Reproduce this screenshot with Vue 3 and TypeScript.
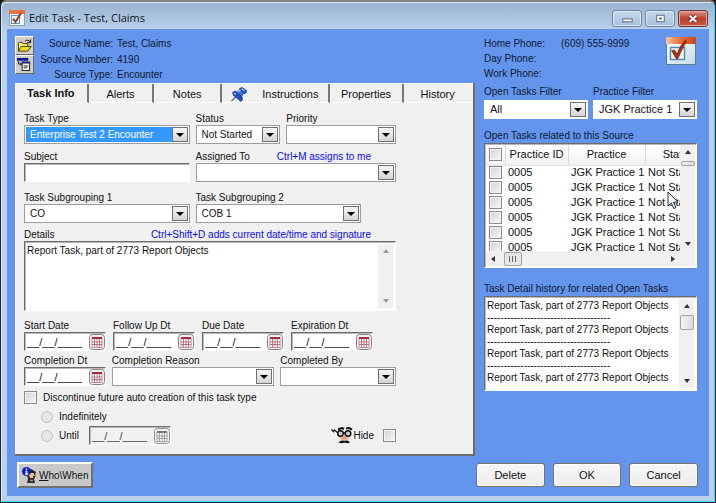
<script setup lang="ts">
import { ref } from 'vue'

interface TaskRow { id: string; practice: string; status: string; picked: boolean }

const sources = [
  { label: 'Source Name:', value: 'Test, Claims' },
  { label: 'Source Number:', value: '4190' },
  { label: 'Source Type:', value: 'Encounter' },
]
const phones = [
  { label: 'Home Phone:', value: '(609) 555-9999' },
  { label: 'Day Phone:', value: '' },
  { label: 'Work Phone:', value: '' },
]
const tabs = ['Task Info', 'Alerts', 'Notes', 'Instructions', 'Properties', 'History']
const activeTab = ref('Task Info')

const typeRow = [
  { id: 'type', label: 'Task Type', value: 'Enterprise Test 2 Encounter', selected: true },
  { id: 'status', label: 'Status', value: 'Not Started', selected: false },
  { id: 'priority', label: 'Priority', value: '', selected: false },
]
const groupRow = [
  { id: 'group1', label: 'Task Subgrouping 1', value: 'CO' },
  { id: 'group2', label: 'Task Subgrouping 2', value: 'COB 1' },
]
const dates = [
  { id: 'start', label: 'Start Date' },
  { id: 'follow', label: 'Follow Up Dt' },
  { id: 'due', label: 'Due Date' },
  { id: 'expire', label: 'Expiration Dt' },
]
const completionRow = [
  { id: 'reason', label: 'Completion Reason' },
  { id: 'by', label: 'Completed By' },
]
const filters = [
  { id: 'open-filter', label: 'Open Tasks Filter', value: 'All' },
  { id: 'practice-filter', label: 'Practice Filter', value: 'JGK Practice 1' },
]
const emptyDate = '__/__/____'
const subject = ref('')
const details = ref('Report Task, part of 2773 Report Objects')
const history = Array(4).fill(details.value).join('\n' + '-'.repeat(37) + '\n')
const discontinue = ref(false)
const hide = ref(false)
const allPicked = ref(false)
const rows = ref<TaskRow[]>(
  Array.from({ length: 6 }, () => ({ id: '0005', practice: 'JGK Practice 1', status: 'Not Started', picked: false })),
)
</script>

<template>
  <div class="window">
    <header class="titlebar">
      <svg class="app-icon" viewBox="0 0 16 16">
        <rect x="0.5" y="0.5" width="15" height="15" fill="#eef4f8" stroke="#8fa0ae" />
        <rect x="0" y="0" width="16" height="4" fill="#e0763a" />
        <rect x="2.5" y="5.5" width="8" height="8" fill="#fff" stroke="#5d92bd" />
        <path d="M4 8.5l2.5 3.5L12 3" fill="none" stroke="#8e3c20" stroke-width="2" />
      </svg>
      <h1>Edit Task - Test, Claims</h1>
      <div class="caption">
        <button type="button" aria-label="Minimize"><svg viewBox="0 0 28 16"><rect x="9.500" y="8.500" width="10" height="3" fill="#fff" stroke="#56657a" /></svg></button>
        <button type="button" aria-label="Maximize"><svg viewBox="0 0 28 16"><rect x="10.500" y="4.500" width="8" height="7" fill="#fff" stroke="#56657a" /><rect x="13" y="7" width="3" height="2" fill="#56657a" /></svg></button>
        <button type="button" class="close" aria-label="Close"><svg viewBox="0 0 28 16"><path d="M10.500 5l7 6.500M17.500 5l-7 6.500" stroke="#6c3030" stroke-width="4" /><path d="M10.500 5l7 6.500M17.500 5l-7 6.500" stroke="#fff" stroke-width="2.200" /></svg></button>
      </div>
    </header>

    <main class="client">
      <section class="left">
        <div class="source">
          <div class="tools">
            <button type="button" aria-label="Open source">
              <svg viewBox="0 0 16 16">
                <path d="M1.500 14V5.500l1-1h3l1 1.500h5v3" fill="#fff36b" stroke="#3a3600" />
                <path d="M1.500 14L4.500 9h10.500l-3.500 5z" fill="#f0dc28" stroke="#3a3600" />
                <path d="M8.500 3.500q2-2.500 4.500-.5l1 1.500M14.500 1.500v3.500H11" fill="none" stroke="#111" />
              </svg>
            </button>
            <button type="button" aria-label="Source list">
              <svg viewBox="0 0 16 16">
                <rect x="0" y="1" width="12" height="3" fill="#0a1a9a" />
                <path d="M1.500 4v3.500H5M3 6l2 1.500L3 9" fill="none" stroke="#222" />
                <rect x="5.500" y="5.500" width="8" height="9" fill="#fff" stroke="#111" />
                <rect x="5" y="5" width="9" height="2" fill="#1b2a8e" />
                <path d="M7 9.500h5M7 11.500h4" stroke="#111" />
              </svg>
            </button>
          </div>
          <dl>
            <template v-for="s in sources" :key="s.label"><dt>{{ s.label }}</dt><dd>{{ s.value }}</dd></template>
          </dl>
        </div>

        <div class="panel">
          <nav class="tabs" role="tablist">
            <button
              v-for="t in tabs" :key="t" type="button" role="tab"
              :class="{ active: t === activeTab }"
              :aria-selected="t === activeTab" @click="activeTab = t"
            >
              <svg v-if="t === 'Instructions'" class="pin" viewBox="0 0 16 15">
                <path d="M.5 14L6 8.500" stroke="#66708c" stroke-width="1.400" />
                <path d="M1.500 5.500L4.500 4l6.500 5.500.5 3.500-2 1.500-2.500-2.500L2.500 8.500z" fill="#2150bf" stroke="#15327f" stroke-width=".7" />
                <path d="M5.500 5l4-3 3.500 3.500-2.500 4z" fill="#3d74e0" stroke="#15327f" stroke-width=".7" />
                <path d="M8.500 1.500L11 .500l4.500 3-.5 2.500-2 .5z" fill="#2a5bd0" stroke="#15327f" stroke-width=".7" />
                <path d="M6.500 5l3-2M10.500 1.800l3 1.700M3 6l2 1.500" stroke="#a9c6fb" stroke-width="1.200" />
              </svg>
              {{ t }}
            </button>
          </nav>

          <form class="form" @submit.prevent>
            <div class="row types">
              <div v-for="f in typeRow" :key="f.id" class="field">
                <label :for="f.id">{{ f.label }}</label>
                <span class="combo" :class="{ selected: f.selected }">
                  <select :id="f.id"><option>{{ f.value }}</option></select><i></i>
                </span>
              </div>
            </div>

            <div class="row subject">
              <div class="field">
                <label for="subject">Subject</label>
                <input id="subject" v-model="subject" class="sunken" type="text">
              </div>
              <div class="field">
                <div class="caption-row"><label for="assigned">Assigned To</label><span class="hint">Ctrl+M assigns to me</span></div>
                <span class="combo"><select id="assigned"><option></option></select><i></i></span>
              </div>
            </div>

            <div class="row groups">
              <div v-for="f in groupRow" :key="f.id" class="field">
                <label :for="f.id">{{ f.label }}</label>
                <span class="combo"><select :id="f.id"><option>{{ f.value }}</option></select><i></i></span>
              </div>
            </div>

            <div class="field details">
              <div class="caption-row"><label for="details">Details</label><span class="hint">Ctrl+Shift+D adds current date/time and signature</span></div>
              <div class="sunken memo">
                <textarea id="details" v-model="details"></textarea>
                <div class="vbar idle"><b class="up"></b><b class="down"></b></div>
              </div>
            </div>

            <div class="row dates">
              <div v-for="d in dates" :key="d.id" class="field">
                <label :for="d.id">{{ d.label }}</label>
                <span class="sunken date">
                  <input :id="d.id" type="text" :value="emptyDate">
                  <button type="button" :aria-label="d.label + ' calendar'">
                    <svg viewBox="0 0 16 16"><rect x=".5" y=".5" width="15" height="15" rx="3" fill="#f7f0f1" stroke="#8b7d80" /><path d="M3 3.500h10v10H3z" fill="#fff" stroke="#b0757c" stroke-width=".8" /><path d="M3 4h10" stroke="#a12c3c" stroke-width="2" /><path d="M5.500 5v8M8 5v8M10.500 5v8M3 8h10M3 10.500h10" stroke="#b06a76" stroke-width=".9" /></svg>
                  </button>
                </span>
              </div>
            </div>

            <div class="row completion">
              <div class="field">
                <label for="completed">Completion Dt</label>
                <span class="sunken date">
                  <input id="completed" type="text" :value="emptyDate">
                  <button type="button" aria-label="Completion calendar">
                    <svg viewBox="0 0 16 16"><rect x=".5" y=".5" width="15" height="15" rx="3" fill="#f7f0f1" stroke="#8b7d80" /><path d="M3 3.500h10v10H3z" fill="#fff" stroke="#b0757c" stroke-width=".8" /><path d="M3 4h10" stroke="#a12c3c" stroke-width="2" /><path d="M5.500 5v8M8 5v8M10.500 5v8M3 8h10M3 10.500h10" stroke="#b06a76" stroke-width=".9" /></svg>
                  </button>
                </span>
              </div>
              <div v-for="f in completionRow" :key="f.id" class="field">
                <label :for="f.id">{{ f.label }}</label>
                <span class="combo"><select :id="f.id"><option></option></select><i></i></span>
              </div>
            </div>

            <label class="check discontinue"><input v-model="discontinue" type="checkbox">Discontinue future auto creation of this task type</label>

            <div class="ending">
              <div class="choices">
                <label class="check"><input type="radio" name="until" disabled>Indefinitely</label>
                <div class="until">
                  <label class="check"><input type="radio" name="until" disabled>Until</label>
                  <span class="sunken date off">
                    <input type="text" :value="emptyDate" aria-label="Until date" disabled>
                    <button type="button" aria-label="Until calendar" disabled>
                      <svg viewBox="0 0 16 16"><rect x=".5" y=".5" width="15" height="15" rx="3" fill="#f0f0f0" stroke="#909090" /><path d="M3 3.500h10v10H3z" fill="#fafafa" stroke="#8c8c8c" stroke-width=".8" /><path d="M3 4h10" stroke="#777" stroke-width="2" /><path d="M5.500 5v8M8 5v8M10.500 5v8M3 8h10M3 10.500h10" stroke="#999" stroke-width=".9" /></svg>
                    </button>
                  </span>
                </div>
              </div>
              <label class="hide">
                <svg viewBox="0 0 22 17">
                  <path d="M8 6h11l-1 6-5 3-4-3z" fill="#e5b79d" />
                  <path d="M7 2.500l4-1.500 2 1M15 1.500l3-.500 3 1.500" fill="none" stroke="#151515" stroke-width="2" />
                  <path d="M.5 2.500l2 2 1-1.500L7 6" fill="none" stroke="#2a2a2a" stroke-width="1.500" />
                  <circle cx="9.500" cy="6.500" r="2.800" fill="#cdd2d4" stroke="#111" stroke-width="1.500" />
                  <circle cx="17" cy="6.500" r="2.800" fill="#cdd2d4" stroke="#111" stroke-width="1.500" />
                  <path d="M12 6h2.500" stroke="#111" stroke-width="1.500" />
                  <path d="M12.500 7.500L11 12h4.500L14 7.500z" fill="#dd9d80" />
                  <path d="M7.500 15.500q2.500-3 6-1.500 3.500-1.500 5.500 1.500-3 1.500-5.500 0-3 1.500-6 0z" fill="#111" />
                </svg>
                Hide
                <input v-model="hide" type="checkbox">
              </label>
            </div>
          </form>
        </div>

        <button type="button" class="who">
          <svg viewBox="0 0 16 17">
            <path d="M4 6l5-4 5 3-1 3H5z" fill="#1b1b2a" />
            <path d="M7 6h5v5l-3 1-2-2z" fill="#efc47c" />
            <path d="M5 8l1 4-1 4h8l-1-4 2-4-2 1" fill="#2c2630" />
            <path d="M7 8h4v3H8z" fill="#efc47c" />
            <path d="M8 13.500h3" stroke="#c89042" stroke-width="1.500" />
            <circle cx="4.500" cy="4.500" r="4.500" fill="#0b1cd6" />
            <path d="M4.500 1.500v1.500M3.500 4.500h1.200v2.500M3 7h3.200" fill="none" stroke="#fff" stroke-width="1.300" />
          </svg>
          <span><u>W</u>ho\When</span>
        </button>
      </section>

      <aside class="right">
        <div class="phones">
          <dl>
            <template v-for="p in phones" :key="p.label"><dt>{{ p.label }}</dt><dd>{{ p.value }}</dd></template>
          </dl>
          <svg class="logo" viewBox="0 0 30 28">
            <defs>
              <linearGradient id="bar" x2="1"><stop stop-color="#f4c3a3" /><stop offset=".5" stop-color="#e56f38" /><stop offset="1" stop-color="#c8481c" /></linearGradient>
              <linearGradient id="page" x2="1" y2="1"><stop stop-color="#fff" /><stop offset="1" stop-color="#c5dbe8" /></linearGradient>
            </defs>
            <rect x=".5" y=".5" width="29" height="27" fill="url(#page)" stroke="#5d7f96" />
            <rect x="0" y="0" width="30" height="7" fill="url(#bar)" />
            <rect x="4.500" y="10.500" width="14" height="12" fill="#f5fafd" stroke="#4f8fc0" stroke-width="1.500" />
            <path d="M5.500 13.500l3-.5 2.500 4Q14 8.500 19 3.500l1.500.5Q15.500 13 12 21.500h-2z" fill="#a33413" stroke="#7c2409" stroke-width=".7" />
          </svg>
        </div>

        <div class="row filters">
          <div v-for="f in filters" :key="f.id" class="field">
            <label :for="f.id">{{ f.label }}</label>
            <span class="combo"><select :id="f.id"><option>{{ f.value }}</option></select><i></i></span>
          </div>
        </div>

        <h2>Open Tasks related to this Source</h2>
        <div class="sunken grid">
          <div class="viewport">
            <table>
              <thead>
                <tr>
                  <th><input v-model="allPicked" type="checkbox" aria-label="Select all"></th>
                  <th>Practice ID</th><th>Practice</th><th>Status</th>
                </tr>
              </thead>
              <tbody>
                <tr v-for="(r, i) in rows" :key="i">
                  <td><input v-model="r.picked" type="checkbox" :aria-label="'Select task ' + (i + 1)"></td>
                  <td>{{ r.id }}</td><td>{{ r.practice }}</td><td>{{ r.status }}</td>
                </tr>
              </tbody>
            </table>
          </div>
          <div class="vbar"><b class="up"></b><span class="thumb thin"></span><b class="down"></b></div>
          <div class="hbar"><b class="back"></b><span class="thumb"></span><b class="next"></b></div>
          <svg class="pointer" viewBox="0 0 12 19"><path d="M1 1v14l3.300-3 2.500 5.500 2.200-1-2.500-5.300H11z" fill="#fff" stroke="#222b44" /></svg>
        </div>

        <h2 id="history-title">Task Detail history for related Open Tasks</h2>
        <div class="sunken memo history">
          <textarea readonly aria-labelledby="history-title" :value="history"></textarea>
          <div class="vbar"><b class="up"></b><span class="thumb"></span><b class="down"></b></div>
        </div>

        <div class="actions">
          <button type="button">Delete</button>
          <button type="button">OK</button>
          <button type="button">Cancel</button>
        </div>
      </aside>
    </main>
  </div>
</template>

<style>
body { background: #111; }
</style>

<style scoped>
* { box-sizing: border-box; }
.window {
  min-height: 100vh;
  display: flex;
  flex-direction: column;
  padding: 0 6px 6px;
  background: linear-gradient(#9ab3d0, #b9d1ea 29px, #b9d1ea);
  border: solid #1c2c34;
  border-width: 2px 1px 1px;
  border-top-color: #86807f;
  border-radius: 6px 6px 0 0;
  box-shadow: inset -1px -1px #3cdcf0, inset 1px 1px #dbe7f3;
  font: 10px/13px "Liberation Sans", Arial, sans-serif;
  color: #111;
  white-space: nowrap;
}
button, input, select, textarea { font: inherit; color: inherit; margin: 0; border-radius: 0; }
input, textarea { outline: 0; }
h1, h2, dl, dd { margin: 0; font: inherit; }
svg { display: block; }

.titlebar { height: 27px; display: flex; align-items: center; gap: 4px; padding: 5px 1px 0 2px; }
.app-icon { width: 16px; height: 16px; }
.titlebar h1 { flex: 1; font: 11px/16px "Open Sans", "Noto Sans", sans-serif; color: #101820; }
.caption { display: flex; gap: 3px; }
.caption button { width: 30px; height: 17px; padding: 0; border: 1px solid #6c86a5; border-radius: 3px; background: linear-gradient(#c7d9ec, #a5bfdc); box-shadow: inset 0 0 0 1px #dbe8f5; }
.caption button svg { width: 28px; height: 15px; }
.caption .close { border-color: #6e3434; background: linear-gradient(#dd9a8e, #bd3f2c 50%, #c65a40); box-shadow: inset 0 0 0 1px #e0aaa0; }

.client { flex: 1; display: grid; grid-template-columns: minmax(0, 460fr) minmax(0, 213fr); gap: 9px; padding: 7px 12px 8px 8px; background: #6495ed; }
.left, .right { display: flex; flex-direction: column; }
dl { display: grid; line-height: 15px; color: #0f1830; }

.source { display: flex; height: 47px; }
.tools { display: flex; flex-direction: column; }
.tools button { width: 19px; height: 19px; padding: 1px; border: 1px solid; border-color: #fff #666 #666 #fff; background: #d4d0c8; }
.tools svg { width: 15px; height: 15px; }
.source dl { grid-template-columns: 79px auto; column-gap: 4px; }
.source dt { text-align: right; }

.panel { flex: 1; background: #f0f0f0; border: solid #6b6b6b; border-width: 0 2px 2px 0; box-shadow: inset 1px 1px #fff; }
.tabs { display: grid; grid-template-columns: 74fr 66fr 68fr 108fr 75fr 69fr; height: 20px; padding-top: 1px; }
.tabs button { display: flex; align-items: center; justify-content: center; gap: 15px; padding: 2px 0 0; border: 0; border-right: 2px solid #777; border-bottom: 1px solid #fff; background: none; font-size: 11px; }
.tabs button:last-child { border-right-color: transparent; }
.tabs .active { border-bottom-color: transparent; padding-top: 0; font-weight: bold; }
.pin { width: 16px; height: 15px; }

.form { padding: 9px 77px 8px 9px; }
.row { display: grid; column-gap: 6px; }
.field { display: flex; flex-direction: column; min-width: 0; }
.types { grid-template-columns: 166fr 85fr 110fr; margin-bottom: 6px; }
.subject { grid-template-columns: 166fr 201fr; margin-bottom: 9px; }
.groups { grid-template-columns: 166fr 166fr 29fr; margin-bottom: 5px; }
.details { margin-bottom: 8px; }
.dates { grid-template-columns: repeat(4, 82fr) 16fr; column-gap: 7px; margin-bottom: 3px; }
.completion { grid-template-columns: 82fr 163fr 116fr; margin-bottom: 5px; }
.caption-row { display: flex; justify-content: space-between; padding-right: 25px; }
.hint { color: #0a0af0; }

.combo { display: grid; height: 19px; border: 1px solid #9c9ca4; background: #fff; padding: 1px; }
.combo select, .combo i { grid-area: 1 / 1; }
.combo select { appearance: none; width: 100%; min-width: 0; height: 15px; border: 0; padding: 0 18px 0 4px; background: none; outline: 0; }
.combo i { justify-self: end; width: 16px; height: 15px; display: grid; place-items: center; border: 1px solid #6f6f6f; background: linear-gradient(#f6f6f6, #d4d4d4); pointer-events: none; }
.combo i::after { content: ""; border: solid transparent; border-width: 4px 4px 0; border-top-color: #000; }
.combo.selected select { background: #3399ff; color: #fff; }

.sunken { border: 1px solid; border-color: #6d6d6d #fff #fff #6d6d6d; box-shadow: inset 1px 1px #b8b8b8; background: #fff; }
input.sunken { height: 19px; padding: 0 3px; width: 100%; }
.memo { display: flex; height: 70px; padding: 2px; }
.memo textarea { flex: 1; min-width: 0; border: 0; padding: 1px 0; background: none; resize: none; overflow: hidden; line-height: 12px; }
.vbar { width: 15px; display: flex; flex-direction: column; align-items: center; background: #f0f0f0; padding: 5px 0; }
.vbar .down { margin-top: auto; }
b { border: 3px solid transparent; }
.up { border-top: 0; border-bottom: 4px solid #333; }
.down { border-bottom: 0; border-top: 4px solid #333; }
.back { border-left: 0; border-right: 4px solid #333; }
.next { border-right: 0; border-left: 4px solid #333; margin-left: auto; }
.idle .up { border-bottom-color: #999; }
.idle .down { border-top-color: #999; }
.thumb { width: 14px; height: 15px; margin-top: 7px; border: 1px solid #a3a3a3; border-radius: 2px; background: linear-gradient(90deg, #f5f5f5, #dadada); }
.thumb.thin { height: 5px; }

.date { display: flex; height: 19px; align-items: center; }
.date input { flex: 1; min-width: 0; width: 0; height: 17px; border: 0; padding: 0 2px; background: none; font-size: 11px; }
.date button { width: 16px; height: 16px; padding: 0; border: 0; background: none; }
.date svg { width: 16px; height: 16px; }
.off { width: 82px; background: #f0f0f0; }
.off input { color: #444; }

.check { display: flex; align-items: center; gap: 6px; }
input[type="checkbox"] { appearance: none; flex: none; width: 13px; height: 13px; border: 1px solid #8b8b8b; background: linear-gradient(135deg, #cfd2d6, #f8f8f8); box-shadow: inset 0 0 0 1px #f4f4f4; }
input[type="radio"] { appearance: none; width: 12px; height: 12px; border: 1px solid #c2c2c2; border-radius: 50%; background: #e6e6e6; }
.ending { display: flex; align-items: flex-end; justify-content: space-between; padding: 3px 0 0 17px; }
.choices .check { height: 19px; }
.until { display: flex; gap: 10px; }
.hide { display: flex; align-items: center; height: 19px; }
.hide svg { width: 22px; height: 17px; }
.hide input { margin-left: 9px; }

.who { align-self: flex-start; display: flex; align-items: center; gap: 1px; height: 26px; margin: 6px 0 0 2px; padding: 0 3px; border: 2px solid; border-color: #fff #707070 #707070 #fff; background: #c9c9c9; }
.who svg { width: 16px; height: 17px; }

.phones { display: flex; justify-content: space-between; align-items: flex-start; height: 49px; padding-right: 1px; }
.phones dl { grid-template-columns: 77px auto; }
.logo { width: 30px; height: 28px; margin-top: 1px; }
.filters { grid-template-columns: 1fr 1fr; column-gap: 5px; margin-bottom: 10px; color: #0f1830; }
.filters label { height: 15px; }
.filters .combo { border-color: #fff; color: #111; font-size: 11px; }
h2 { color: #0f1830; margin-bottom: 1px; }
.grid { position: relative; display: grid; grid-template: 106px 15px / minmax(0, 1fr) 15px; padding: 1px; margin-bottom: 14px; font-size: 11px; }
.viewport { overflow: hidden; }
table { border-collapse: collapse; table-layout: fixed; width: 226px; }
th, td { padding: 0; height: 15px; line-height: 13px; text-align: left; overflow: hidden; font-weight: normal; }
td { padding-left: 3px; }
th { height: 20px; text-align: center; border-right: 1px solid #dcdcdc; border-bottom: 1px solid #e4e4e4; background: linear-gradient(#fff, #f2f2f2); }
th:nth-child(1) { width: 19px; }
th:nth-child(2) { width: 63px; }
th:nth-child(3) { width: 77px; }
td:first-child, th:first-child { padding-left: 3px; text-align: left; }
td input, th input { display: block; }
.hbar { grid-column: 1 / 3; display: flex; align-items: center; padding: 0 20px 0 5px; background: #f0f0f0; }
.hbar .thumb { width: 18px; height: 14px; margin: 0 0 0 9px; background: repeating-linear-gradient(90deg, #666 0 1px, transparent 1px 3px) center / 8px 6px no-repeat #e6e6e6; }
.pointer { position: absolute; right: 17px; top: 47px; width: 12px; height: 19px; }
.history { height: 95px; }
.actions { display: grid; grid-template-columns: repeat(3, 1fr); gap: 8px; margin: auto -1px 1px -8px; }
.actions button { height: 24px; padding: 0; border: 1px solid #77716e; border-radius: 3px; background: linear-gradient(#f6f6f6, #ececec); box-shadow: inset 0 0 0 1px #fff; font-size: 11px; }
</style>
